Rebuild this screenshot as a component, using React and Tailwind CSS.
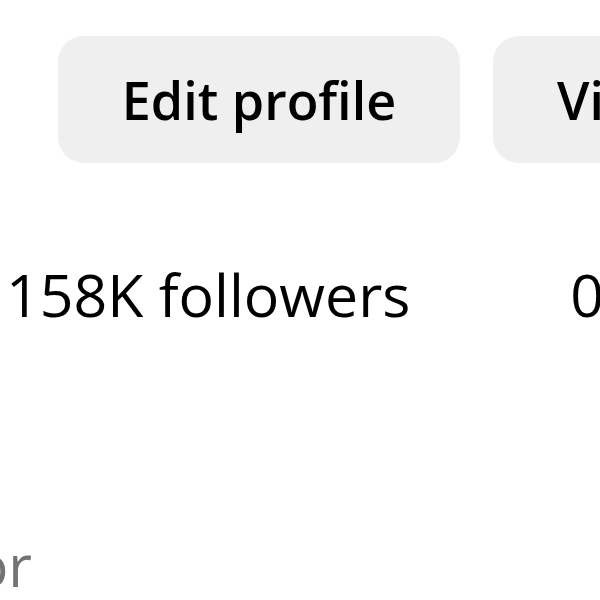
import React from 'react'

const App = () => {
    return (
        <div className='w-[600px] h-[600px] overflow-hidden bg-white text-black' style={{ fontFamily: '"Open Sans", "Noto Sans", sans-serif' }}>
            {/* action buttons */}
            <div className='flex gap-[33px] pt-[36px] pl-[58px] whitespace-nowrap'>
                <button className='shrink-0 w-[402px] h-[127px] rounded-[26px] bg-[#efefef] text-[52px] font-semibold text-black flex items-center justify-center'>
                    Edit profile
                </button>
                <button className='shrink-0 w-[402px] h-[127px] rounded-[26px] bg-[#efefef] text-[52px] font-semibold text-black flex items-center justify-start pl-[64px]'>
                    View archive
                </button>
            </div>
            {/* stats */}
            <div className='flex gap-[160px] mt-[102px] pl-[6px] text-[59px] leading-none whitespace-nowrap'>
                <span>158K followers</span>
                <span>0 following</span>
            </div>
            {/* category */}
            <div className='mt-[212px] flex justify-end w-[32px] whitespace-nowrap text-[58px] leading-none text-[#737373]'>
                <span>Digital creator</span>
            </div>
        </div>
    )
}

export default App
